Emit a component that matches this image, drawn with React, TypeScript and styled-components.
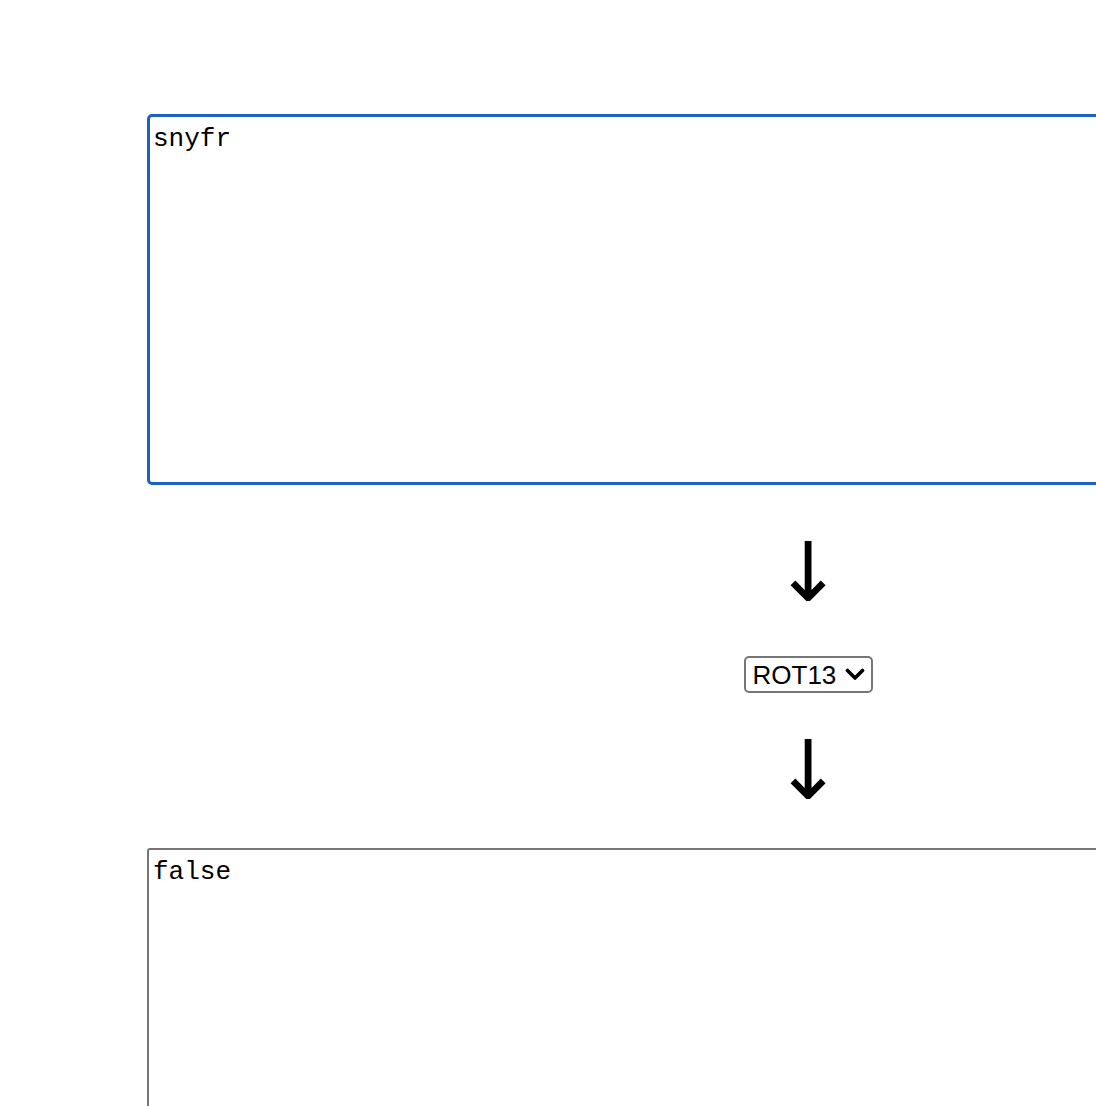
import React from "react";
import styled, { createGlobalStyle } from "styled-components";

const Global = createGlobalStyle`
  html, body {
    margin: 0;
    padding: 0;
    background: #ffffff;
    overflow: hidden;
  }
`;

const Page = styled.main`
  padding: 114px 0 0 147px;
`;

const Column = styled.div`
  width: 1322px;
  display: flex;
  flex-direction: column;
  align-items: center;
`;

const TextBox = styled.textarea<{ $focused?: boolean }>`
  box-sizing: border-box;
  width: 100%;
  height: ${(p) => (p.$focused ? "371px" : "300px")};
  margin: 0;
  padding: ${(p) => (p.$focused ? "7px 3px" : "7px 4px")};
  font-family: "Liberation Mono", "Courier New", monospace;
  font-size: 26px;
  color: #000;
  resize: none;
  outline: none;
  border: ${(p) => (p.$focused ? "3px solid #1f60c4" : "2px solid #767676")};
  border-radius: ${(p) => (p.$focused ? "5px" : "3px")};
  background: #fff;
`;

const Arrow = styled.div<{ $top: number; $bottom: number }>`
  height: 70px;
  line-height: 70px;
  font-family: "DejaVu Sans", sans-serif;
  font-size: 82px;
  color: #000;
  margin: ${(p) => `${p.$top}px 0 ${p.$bottom}px`};
`;

const SelectWrap = styled.div`
  position: relative;
  display: inline-block;
`;

const Select = styled.select`
  box-sizing: border-box;
  display: block;
  height: 37px;
  width: 129px;
  padding: 0 30px 0 7px;
  appearance: none;
  -webkit-appearance: none;
  font-family: "Liberation Sans", Arial, sans-serif;
  font-size: 26px;
  color: #000;
  border: 2px solid #767676;
  border-radius: 5px;
  background: #fff;
`;

const Chevron = styled.svg`
  position: absolute;
  right: 8px;
  top: 12px;
  pointer-events: none;
`;

export default function App() {
  return (
    <>
      <Global />
      <Page>
        <Column>
          <TextBox $focused defaultValue="snyfr" spellCheck />
          <Arrow $top={53} $bottom={48}>↓</Arrow>
          <SelectWrap>
            <Select defaultValue="rot13">
              <option value="rot13">ROT13</option>
              <option value="base64">Base64</option>
            </Select>
            <Chevron width="20" height="13" viewBox="0 0 20 13">
              <path d="M2.5 2.5 L10 10 L17.5 2.5" fill="none" stroke="#000" strokeWidth="3.6" strokeLinecap="round" strokeLinejoin="round" />
            </Chevron>
          </SelectWrap>
          <Arrow $top={43} $bottom={42}>↓</Arrow>
          <TextBox defaultValue="false" readOnly />
        </Column>
      </Page>
    </>
  );
}
